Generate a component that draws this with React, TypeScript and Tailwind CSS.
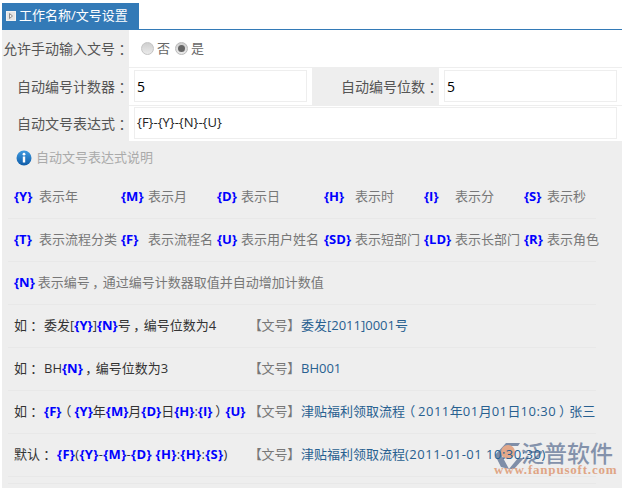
import React from 'react';

const font = '"Open Sans", "Noto Sans CJK SC", sans-serif';

function Key({ children }: { children: React.ReactNode }) {
  return <span className="font-bold text-[#0000ff]">{children}</span>;
}

// full-width punctuation sits in the middle of its em box in the reference
function P({ children }: { children: React.ReactNode }) {
  return <span className="inline-block w-[1em] text-center [font-feature-settings:'palt']">{children}</span>;
}

// latin runs are a little wider than the cjk font's neighbours
function Num({ children }: { children: React.ReactNode }) {
  return <span className="tracking-[0.5px]">{children}</span>;
}

const legendRows = [
  [['{Y}', '表示年'], ['{M}', '表示月'], ['{D}', '表示日'], ['{H}', '表示时'], ['{I}', '表示分'], ['{S}', '表示秒']],
  [['{T}', '表示流程分类'], ['{F}', '表示流程名'], ['{U}', '表示用户姓名'], ['{SD}', '表示短部门'], ['{LD}', '表示长部门'], ['{R}', '表示角色']],
];
const keyWidths = ['w-[25px]', 'w-[27px]', 'w-[24px]', 'w-[31px]', 'w-[31px]', 'w-[23px]'];

function Row({ children }: { children: React.ReactNode }) {
  return <div className="relative h-[43px] flex items-center border-b border-[#e8e8e8] pl-[6px] ml-[6px] w-[588px] shrink-0">{children}</div>;
}

function ExampleRow({ left, value }: { left: React.ReactNode; value: React.ReactNode }) {
  return (
    <Row>
      <div className="w-[241px] shrink-0 whitespace-nowrap text-[#333]">{left}</div>
      <div className="text-[#777] whitespace-nowrap w-[46px] shrink-0 [font-feature-settings:'palt']">【文号】</div>
      <div className="text-[#286090] whitespace-nowrap">{value}</div>
    </Row>
  );
}

function Label({ text }: { text: string }) {
  return (
    <div className="w-[127px] bg-[#eee] text-[14px] text-[#555] flex items-center justify-end whitespace-nowrap">
      <span>{text}<P>：</P></span>
    </div>
  );
}

export default function App() {
  return (
    <div className="w-[622px] h-[488px] overflow-hidden bg-white pl-[2px] pt-[3px]" style={{ fontFamily: font }}>
      {/* Tab */}
      <div className="border-b border-[#337ab7] h-[27px]">
        <div className="w-[137px] h-[26px] bg-[#337ab7] text-white text-[13px] flex items-center pl-[4px] gap-[3px]">
          <svg width="10" height="10" viewBox="0 0 10 10">
            <rect x="0.5" y="0.5" width="9" height="9" fill="#e4e4e4" stroke="#f2f2f2" />
            <path d="M3.5 2.5 L6.5 5 L3.5 7.5 Z" fill="#f4f4f4" stroke="#8a8a8a" />
          </svg>
          <span className="whitespace-nowrap">工作名称/文号设置</span>
        </div>
      </div>

      {/* Form */}
      <div className="flex h-[38px] border-b border-[#eee]">
        <Label text="允许手动输入文号" />
        <div className="flex items-center pl-[12px] text-[13px] text-[#666]">
          <span className="w-[13px] h-[13px] rounded-full border border-[#c4c4c4] bg-gradient-to-b from-[#cfcfcf] to-[#eaeaea]" />
          <span className="ml-[3px]">否</span>
          <span className="ml-[5px] w-[13px] h-[13px] rounded-full border border-[#bbb] bg-gradient-to-b from-[#cfcfcf] to-[#eaeaea] flex items-center justify-center">
            <span className="w-[7px] h-[7px] rounded-full bg-[#666]" />
          </span>
          <span className="ml-[3px]">是</span>
        </div>
      </div>
      <div className="flex h-[38px] border-b border-[#eee]">
        <Label text="自动编号计数器" />
        <div className="w-[183px] pl-[5px] pt-[2px]">
          <div className="w-[173px] h-[32px] border border-[#eee] flex items-center pl-[2px] text-[14px] text-black">5</div>
        </div>
        <Label text="自动编号位数" />
        <div className="pl-[5px] pt-[2px]">
          <div className="w-[173px] h-[32px] border border-[#eee] flex items-center pl-[2px] text-[14px] text-black">5</div>
        </div>
      </div>
      <div className="flex h-[35px]">
        <Label text="自动文号表达式" />
        <div className="pl-[5px] pt-[1px]">
          <div className="w-[483px] h-[32px] border border-[#eee] flex items-center pl-[2px] text-[13px] text-[#222]">{'{F}-{Y}-{N}-{U}'}</div>
        </div>
      </div>

      {/* Help panel */}
      <div className="relative bg-[#eee] h-[347px] text-[13px] text-[#777] flex flex-col">
        {/* Watermark, drawn under the row text */}
        <div className="absolute left-[492px] top-[301px] flex items-start">
          <svg width="31" height="28" viewBox="0 0 31 28">
            <path d="M12 1 L26 1 L24 4 L16 4 L8 14 L15 27 L7 25 L1 13 Z" fill="#7f8ea8" />
            <path d="M24 16 L30 16 L20 27 L15 27 Z" fill="#7f8ea8" />
            <circle cx="14" cy="10" r="7" fill="#e3a88a" />
          </svg>
          <div className="absolute left-[27px] top-[-5px] text-[23px] leading-[32px] font-medium text-[#8492ab] whitespace-nowrap">泛普软件</div>
          <div className="absolute left-0 top-[22px] text-[13px] leading-[12px] font-bold tracking-[0.8px] text-[#e0a585] whitespace-nowrap" style={{ fontFamily: '"Liberation Serif", serif' }}>www.fanpusoft.com</div>
        </div>

        <div className="relative h-[35px] flex items-center pl-[14px] pb-[2px] gap-[4px] text-[#aaa] shrink-0">
          <svg width="16" height="16" viewBox="0 0 16 16">
            <defs>
              <linearGradient id="info" x1="0" y1="0" x2="0" y2="1">
                <stop offset="0" stopColor="#3f9ae0" />
                <stop offset="1" stopColor="#0f5ca8" />
              </linearGradient>
            </defs>
            <circle cx="8" cy="8" r="7.5" fill="url(#info)" />
            <circle cx="8" cy="4.2" r="1.4" fill="#fff" />
            <rect x="6.8" y="6.5" width="2.4" height="6" fill="#fff" />
          </svg>
          <span>自动文号表达式说明</span>
        </div>
        {legendRows.map((row, i) => (
          <div key={i} className="relative h-[43px] w-[588px] ml-[6px] pl-[6px] grid grid-cols-[107px_96px_107px_100px_100px_1fr] items-center border-b border-[#e8e8e8] shrink-0">
            {row.map(([k, t], j) => (
              <div key={k} className="whitespace-nowrap flex">
                <span className={`${keyWidths[j]} shrink-0 whitespace-nowrap`}><Key>{k}</Key></span>
                <span>{t}</span>
              </div>
            ))}
          </div>
        ))}
        <Row>
          <Key>{'{N}'}</Key>
          <span className="ml-[3px]">表示编号<P>，</P>通过编号计数器取值并自动增加计数值</span>
        </Row>
        <ExampleRow left={<>如<P>：</P><span className="ml-[4px]">委发[<Key>{'{Y}'}</Key>]<Key>{'{N}'}</Key>号<P>，</P>编号位数为4</span></>} value="委发[2011]0001号" />
        <ExampleRow left={<>如<P>：</P><span className="ml-[4px]">BH<Key>{'{N}'}</Key><P>，</P>编号位数为3</span></>} value="BH001" />
        <ExampleRow left={<>如<P>：</P><span className="ml-[4px]"><Key>{'{F}'}</Key><P>（</P><Key>{'{Y}'}</Key>年<Key>{'{M}'}</Key>月<Key>{'{D}'}</Key>日<Key>{'{H}'}</Key>:<Key>{'{I}'}</Key><P>）</P><Key>{'{U}'}</Key></span></>} value={<>津贴福利领取流程<P>（</P><Num>2011</Num>年<Num>01</Num>月<Num>01</Num>日<Num>10:30</Num><P>）</P>张三</>} />
        <ExampleRow left={<>默认<P>：</P><span className="ml-[4px] tracking-[0.3px]"><Key>{'{F}'}</Key>(<Key>{'{Y}'}</Key>-<Key>{'{M}'}</Key>-<Key>{'{D}'}</Key> <Key>{'{H}'}</Key>:<Key>{'{H}'}</Key>:<Key>{'{S}'}</Key>)</span></>} value={<>津贴福利领取流程<Num>(2011-01-01 10:30:30)</Num></>} />
        <div className="h-[7px] w-[588px] ml-[6px] border-b border-[#e8e8e8] shrink-0" />
      </div>
    </div>
  );
}
